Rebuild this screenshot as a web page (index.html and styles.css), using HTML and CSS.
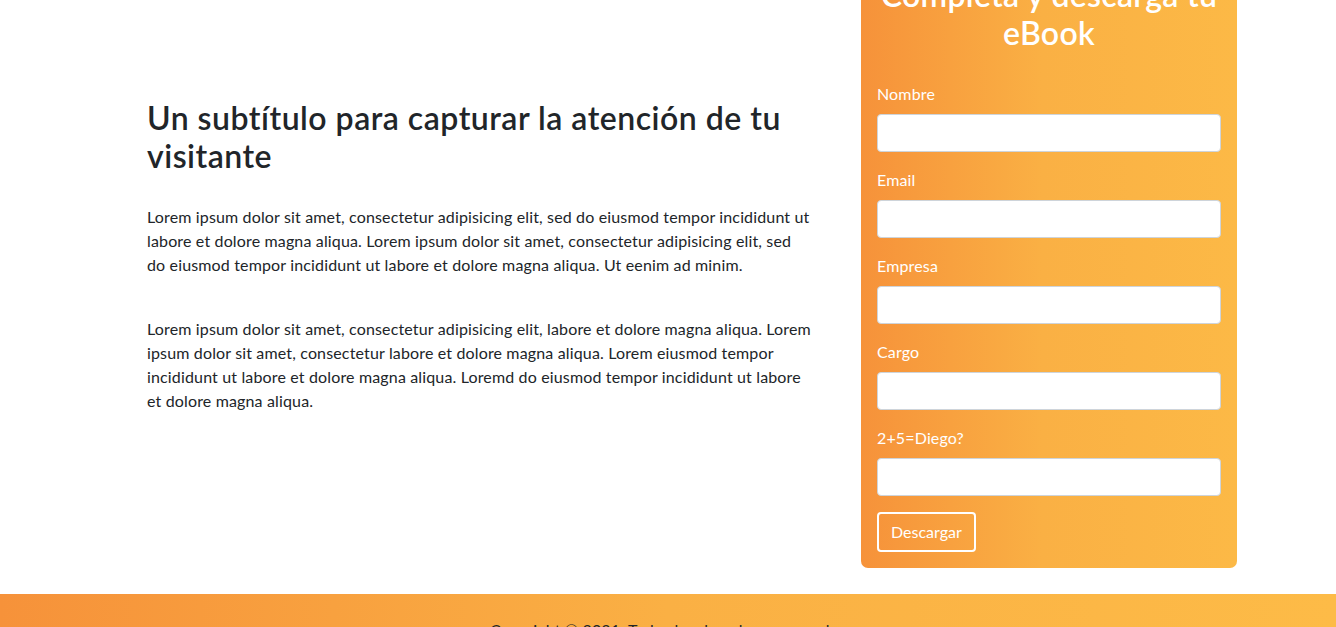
FILE: index.html
```html
<!DOCTYPE html>
<html lang="es">
<head>
<meta charset="utf-8">
<title>Descarga tu eBook</title>
<link rel="stylesheet" href="styles.css">
</head>
<body>
<main class="page">
  <section class="hero">
    <div class="container">
      <div class="intro">
        <h2 class="intro-title">Un subtítulo para capturar la atención de tu visitante</h2>
        <p class="intro-text intro-text--first">Lorem ipsum dolor sit amet, consectetur adipisicing elit, sed do eiusmod tempor incididunt ut labore et dolore magna aliqua. Lorem ipsum dolor sit amet, consectetur adipisicing elit, sed do eiusmod tempor incididunt ut labore et dolore magna aliqua. Ut eenim ad minim.</p>
        <p class="intro-text">Lorem ipsum dolor sit amet, consectetur adipisicing elit, labore et dolore magna aliqua. Lorem ipsum dolor sit amet, consectetur labore et dolore magna aliqua. Lorem eiusmod tempor incididunt ut labore et dolore magna aliqua. Loremd do eiusmod tempor incididunt ut labore et dolore magna aliqua.</p>
      </div>
      <aside class="form-card">
        <h2 class="form-title">Completa y descarga tu eBook</h2>
        <form class="form">
          <div class="form-group">
            <label class="form-label" for="nombre">Nombre</label>
            <input class="form-input" id="nombre" type="text">
          </div>
          <div class="form-group">
            <label class="form-label" for="email">Email</label>
            <input class="form-input" id="email" type="email">
          </div>
          <div class="form-group">
            <label class="form-label" for="empresa">Empresa</label>
            <input class="form-input" id="empresa" type="text">
          </div>
          <div class="form-group">
            <label class="form-label" for="cargo">Cargo</label>
            <input class="form-input" id="cargo" type="text">
          </div>
          <div class="form-group">
            <label class="form-label" for="captcha">2+5=Diego?</label>
            <input class="form-input" id="captcha" type="text">
          </div>
          <button class="btn-download" type="button">Descargar</button>
        </form>
      </aside>
    </div>
  </section>
  <footer class="footer">
    <p class="footer-text">Copyright © 2021. Todos los derechos reservados</p>
  </footer>
</main>
</body>
</html>
```
FILE: styles.css
```css
* { box-sizing: border-box; }

html, body {
  margin: 0;
  padding: 0;
  background: #fff;
}

body {
  font-family: Lato, "Noto Sans", "Liberation Sans", sans-serif;
  font-size: 16px;
  line-height: 1.5;
  letter-spacing: 0.15px;
  color: #212529;
}

.page {
  margin-top: -40px;
}

.container {
  width: 1140px;
  margin: 0 auto;
  display: flex;
  align-items: center;
}

.intro {
  width: 713px;
  padding-left: 49px;
}

.intro-title {
  margin: 0 0 29px;
  font-size: 32px;
  font-weight: 600;
  line-height: 38.4px;
  letter-spacing: 0.5px;
  color: #212529;
}

.intro-text {
  margin: 0 0 16px;
}

.intro-text--first {
  margin-bottom: 40px;
}

.form-card {
  width: 376px;
  margin-left: auto;
  margin-right: 1px;
  padding: 16px;
  border-radius: 7px;
  background: linear-gradient(90deg, #f6923a 0%, #fab044 48%, #fcb946 100%);
  color: #fff;
}

.form-title {
  margin: 0 0 29px;
  font-size: 32px;
  font-weight: 600;
  line-height: 38.4px;
  letter-spacing: 0.3px;
  text-align: center;
}

.form {
  margin: 0;
}

.form-group {
  margin-bottom: 16px;
}

.form-label {
  display: block;
  margin-bottom: 8px;
  line-height: 24px;
}

.form-input {
  display: block;
  width: 100%;
  height: 38px;
  padding: 6px 12px;
  border: 1px solid #ced4da;
  border-radius: 4px;
  background: #fff;
  font: inherit;
  color: #495057;
}

.btn-download {
  display: inline-block;
  padding: 6px 12px;
  border: 2px solid #fff;
  border-radius: 4px;
  background: transparent;
  color: #fff;
  font: inherit;
  line-height: 24px;
  cursor: pointer;
}

.footer {
  margin-top: 26px;
  padding: 24px 0;
  background: linear-gradient(90deg, #f6923a 0%, #fab044 50%, #fdbb47 100%);
  text-align: center;
}

.footer-text {
  margin: 0;
  color: #212529;
}
```
